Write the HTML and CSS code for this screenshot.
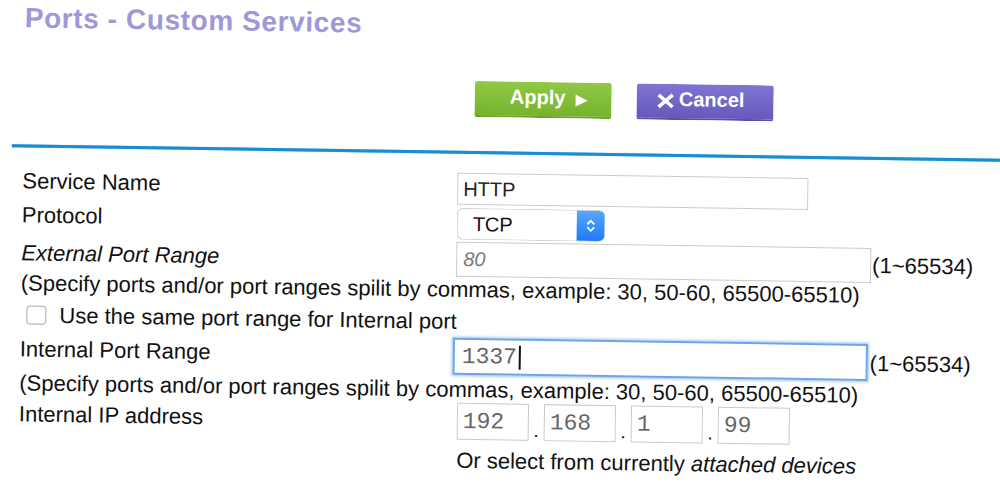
FILE: index.html
```html
<!DOCTYPE html>
<html lang="en">
<head>
    <meta charset="UTF-8">
    <meta name="viewport" content="width=device-width, initial-scale=1.0">
    <title>Ports - Custom Services</title>
    <link rel="stylesheet" href="styles.css">
</head>
<body>
<div class="page">
    <h1 class="title">Ports - Custom Services</h1>

    <!-- Botoes -->
    <div class="acoes">
        <button type="button" class="btn btn-apply">Apply<span class="play"></span></button>
        <button type="button" class="btn btn-cancel">
            <svg class="x-icon" width="20" height="16" viewBox="0 0 20 16"><path d="M3 2 L17 14 M17 2 L3 14" stroke="#fff" stroke-width="3.6" fill="none"/></svg>Cancel
        </button>
    </div>

    <hr class="rule">

    <!-- Formulario do servico -->
    <form class="service-form">
        <div class="row row-name">
            <label for="serviceName">Service Name</label>
            <div class="field">
                <input type="text" id="serviceName" class="text-input name-input" value="HTTP">
            </div>
        </div>

        <div class="row row-protocol">
            <label>Protocol</label>
            <div class="field">
                <div class="select">
                    <span>TCP</span>
                    <span class="stepper">
                        <svg width="12" height="20" viewBox="0 0 12 20"><path d="M2.5 8.5 L6 5 L9.5 8.5 M2.5 11.5 L6 15 L9.5 11.5" stroke="#fff" stroke-width="1.8" fill="none"/></svg>
                    </span>
                </div>
            </div>
        </div>

        <div class="row row-ext">
            <label for="extPort" class="italic">External Port Range</label>
            <div class="field">
                <input type="text" id="extPort" class="text-input port-input ext-input" value="80">
                <span class="range">(1~65534)</span>
            </div>
        </div>

        <p class="note">(Specify ports and/or port ranges spilit by commas, example: 30, 50-60, 65500-65510)</p>

        <div class="check-row">
            <input type="checkbox" id="samePort">
            <label for="samePort">Use the same port range for Internal port</label>
        </div>

        <div class="row row-int">
            <label for="intPort">Internal Port Range</label>
            <div class="field">
                <span class="focus-wrap">
                    <input type="text" id="intPort" class="text-input port-input int-input" value="1337">
                    <span class="caret"></span>
                </span>
                <span class="range range-int">(1~65534)</span>
            </div>
        </div>

        <p class="note note-2">(Specify ports and/or port ranges spilit by commas, example: 30, 50-60, 65500-65510)</p>

        <div class="row row-ip">
            <label>Internal IP address</label>
            <div class="field ip-field">
                <input type="text" class="ip-box" value="192">
                <span class="dot">.</span>
                <input type="text" class="ip-box" value="168">
                <span class="dot">.</span>
                <input type="text" class="ip-box" value="1">
                <span class="dot">.</span>
                <input type="text" class="ip-box" value="99">
            </div>
        </div>

        <div class="row row-devices">
            <span></span>
            <div class="devices">Or select from currently <i>attached devices</i></div>
        </div>
    </form>
</div>
</body>
</html>
```

FILE: styles.css
```css
body {
    margin: 0;
    font-family: "Liberation Sans", Arial, sans-serif;
    color: #111;
    background: #fff;
    overflow: hidden;
}
.page {
    padding: 0 0 18px 25px;
    transform: rotate(0.85deg);
    transform-origin: 0 0;
}
.title {
    margin: 2px 0 0;
    font-size: 28px;
    line-height: 32px;
    letter-spacing: 0.6px;
    font-weight: bold;
    color: #9e98d8;
}

/* botoes */
.acoes {
    display: flex;
    gap: 25px;
    margin-top: 40px;
    padding-left: 451px;
}
.btn {
    display: flex;
    align-items: center;
    justify-content: center;
    box-sizing: border-box;
    width: 137px;
    height: 36px;
    padding: 0 0 3px;
    border: 0;
    border-radius: 3px;
    color: #fff;
    font: bold 20px/23px "Liberation Sans", Arial, sans-serif;
    cursor: pointer;
}
.btn-apply {
    background: linear-gradient(#8fc946, #76b32d);
    border-bottom: 2px solid #68a126;
    padding-left: 11px;
}
.btn-cancel {
    background: linear-gradient(#7f74d3, #6659bc);
    border-bottom: 2px solid #5a4daf;
    padding-right: 10px;
}
.play {
    width: 0;
    height: 0;
    margin: 4px 0 0 10px;
    border-left: 12px solid #fff;
    border-top: 6px solid transparent;
    border-bottom: 6px solid transparent;
}
.x-icon {
    margin: 2px 3px 0 0;
}
.rule {
    margin: 34px 0 0 -11px;
    width: calc(100% + 40px);
    height: 3px;
    border: 0;
    background: #1a8dd1;
    box-shadow: 0 0 1px #6fbfea;
}

/* formulario */
.service-form {
    margin-top: 19px;
}
.row {
    display: grid;
    grid-template-columns: 435px 1fr;
    align-items: start;
}
.row label,
.note,
.check-row label,
.range,
.devices {
    font-size: 22px;
    line-height: 25px;
}
.italic {
    font-style: italic;
}
.field {
    display: flex;
    align-items: flex-start;
}
.row-name { height: 35px; }
.row-name label { padding-top: 2px; }
.row-protocol { height: 34px; }
.row-protocol label { padding-top: 1px; }
.row-ext { height: 35px; }
.row-ext label { padding-top: 5px; }
.row-int { height: 38px; }
.row-int label { padding-top: 5px; }
.row-ip { height: 45px; }
.row-ip label { padding-top: 5px; }

.note {
    margin: 0;
    height: 32px;
}
.note-2 {
    box-sizing: border-box;
    height: 27px;
    padding-top: 1px;
}
.check-row {
    display: flex;
    align-items: flex-start;
    height: 29px;
}
.check-row input {
    appearance: none;
    width: 20px;
    height: 19px;
    margin: 3px 13px 0 6px;
    border: 1.5px solid #a9a9a9;
    border-radius: 4px;
    background: #fff;
}

.text-input {
    box-sizing: border-box;
    margin: 0;
    border: 1px solid #cbcbcb;
    border-radius: 0;
    padding: 0 0 0 5px;
    font: 20px "Liberation Sans", Arial, sans-serif;
    color: #222;
    background: #fff;
    outline: none;
}
.name-input {
    width: 351px;
    height: 32px;
}
.port-input {
    width: 415px;
}
.ext-input {
    height: 35px;
    padding-left: 6px;
    font-style: italic;
    color: #7a7a7a;
}
.focus-wrap {
    position: relative;
    display: block;
    margin-left: -2px;
}
.int-input {
    display: block;
    height: 37px;
    padding-left: 7px;
    border: 2px solid #6ba4ea;
    box-shadow: 0 0 3px 1px #9cc3f0;
    font: 23px "Liberation Mono", "Courier New", monospace;
    color: #666;
}
.caret {
    position: absolute;
    left: 66px;
    top: 7px;
    width: 2px;
    height: 24px;
    background: #111;
}
.range {
    margin-left: 1px;
    padding-top: 5px;
}
.range-int {
    margin-left: 2px;
    padding-top: 7px;
}

.select {
    display: flex;
    align-items: stretch;
    justify-content: space-between;
    box-sizing: border-box;
    width: 148px;
    height: 32px;
    border: 1px solid #d0d0d0;
    border-right: 0;
    border-radius: 6px;
    overflow: hidden;
    font-size: 20px;
    line-height: 30px;
    background: #fff;
}
.select span:first-child {
    padding-left: 15px;
}
.stepper {
    display: flex;
    align-items: center;
    justify-content: center;
    width: 28px;
    margin: -1px 0;
    background: linear-gradient(#5aa9ff, #1d79f5);
    border-radius: 0 6px 6px 0;
}

.ip-field {
    padding-left: 3px;
}
.ip-box {
    box-sizing: border-box;
    width: 72px;
    height: 37px;
    margin: 0;
    padding: 0 0 0 5px;
    border: 1px solid #cbcbcb;
    font: 23px "Liberation Mono", "Courier New", monospace;
    color: #666;
    outline: none;
}
.dot {
    width: 15px;
    text-align: center;
    font-size: 20px;
    line-height: 20px;
    padding-top: 16px;
}
.devices {
    padding-left: 3px;
}
```
